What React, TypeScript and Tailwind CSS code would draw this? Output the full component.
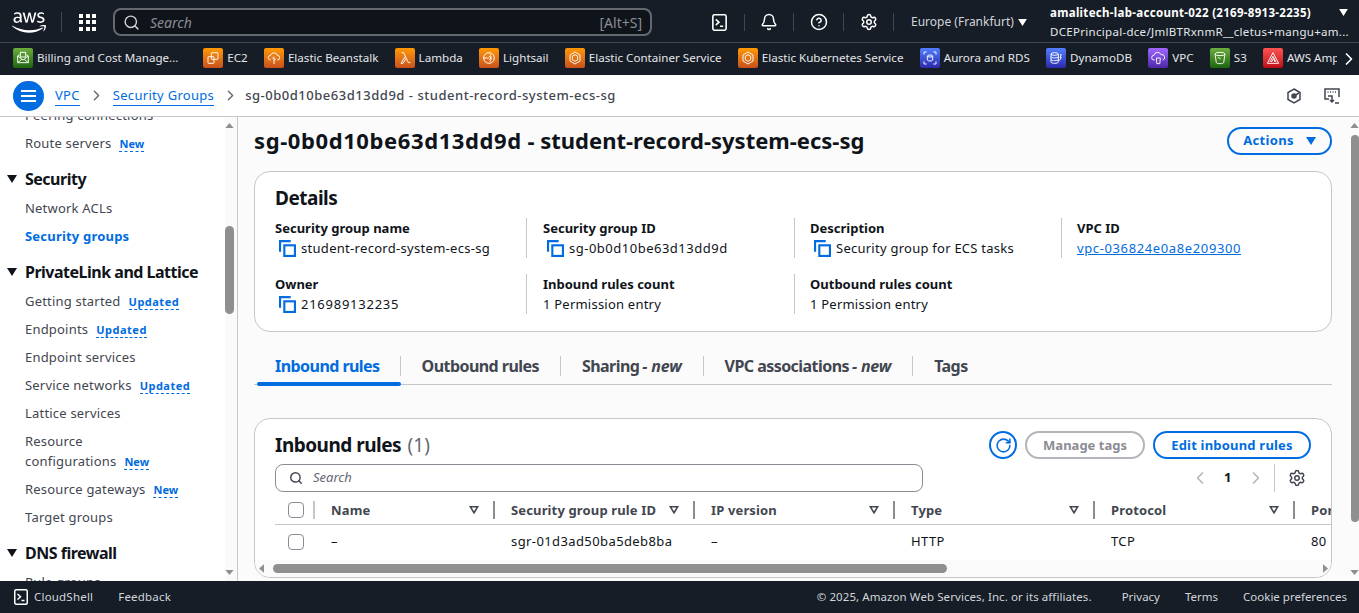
import { ReactNode } from "react";
import { Bell, ChevronLeft, ChevronRight, CircleHelp, RotateCw, Search, Settings } from "lucide-react";
import { FaAws } from "react-icons/fa";

const ORANGE = "bg-linear-to-t from-[#c8511b] to-[#ff9900]";
const BLUE = "bg-linear-to-t from-[#2e27ad] to-[#527fff]";
const GREEN = "bg-linear-to-t from-[#1b660f] to-[#6cae3e]";
const PURPLE = "bg-linear-to-t from-[#4d27a8] to-[#a166ff]";
const RED = "bg-linear-to-t from-[#bd0816] to-[#ff5252]";

const glyphs: Record<string, ReactNode> = {
  billing: (
    <>
      <path d="M4 9l8 6 8-6v10H4z" />
      <path d="M4 9l3-2M20 9l-3-2M4 19l6-5M20 19l-6-5" />
      <rect x="8" y="3.5" width="8" height="7" />
    </>
  ),
  ec2: (
    <>
      <rect x="9.5" y="4" width="10" height="10" rx="1" />
      <rect x="4.5" y="10" width="9" height="10" rx="1" />
    </>
  ),
  beanstalk: (
    <>
      <path d="M7 15a3.5 3.5 0 0 1 0-7 5.2 5.2 0 0 1 10 0 3.5 3.5 0 0 1 0 7" />
      <path d="M12 21V10M12 14l-3-3M12 16l3-3" />
    </>
  ),
  lambda: <path d="M7 4h3l7 15h3M12 10l-6 10h3l4.5-7" />,
  lightsail: (
    <>
      <circle cx="12" cy="12" r="8" />
      <path d="M3 12h9M13 6c3 3 3 9 0 12M12 9l3 3-3 3" />
    </>
  ),
  container: (
    <>
      <path d="M12 3l7.5 4.5v9L12 21l-7.5-4.5v-9z" />
      <path d="M12 7l4 2.3v5.4L12 17l-4-2.3V9.300z" />
    </>
  ),
  aurora: (
    <>
      <path d="M3 7V3h4M17 3h4v4M21 17v4h-4M7 21H3v-4" />
      <ellipse cx="12" cy="9" rx="4" ry="1.500" />
      <path d="M8 9v6c0 2 8 2 8 0V9" />
    </>
  ),
  dynamo: (
    <>
      <ellipse cx="10" cy="6" rx="5.500" ry="2" />
      <path d="M4.500 6v12c0 2.600 11 2.600 11 0V6M4.500 10c0 2.600 11 2.600 11 0M4.500 14c0 2.600 11 2.600 11 0" />
      <path d="M18 7h2l-2 4h2l-3 5" />
    </>
  ),
  vpc: (
    <>
      <path d="M7 15H6a3.500 3.500 0 0 1 0-7 5.500 5.500 0 0 1 10.500-1A4 4 0 0 1 19 15" />
      <path d="M9.500 12h6l-.8 8.500h-4.400z" />
    </>
  ),
  s3: (
    <>
      <ellipse cx="12" cy="6" rx="7.500" ry="2.500" />
      <path d="M4.500 6l2 13c.5 2 10.500 2 11 0l2-13" />
      <path d="M9 11l4 2.500" />
    </>
  ),
  amp: <path d="M12 4l8.500 16h-17zM12 9.500L7.500 18M12 9.500L16.500 18M9.500 18l3.500-5 2 5" />,
};

const bookmarks = [
  { label: "Billing and Cost Manage...", bg: GREEN, glyph: "billing", textClass: "w-[150px]" },
  { label: "EC2", bg: ORANGE, glyph: "ec2", textClass: "" },
  { label: "Elastic Beanstalk", bg: ORANGE, glyph: "beanstalk", textClass: "" },
  { label: "Lambda", bg: ORANGE, glyph: "lambda", textClass: "" },
  { label: "Lightsail", bg: ORANGE, glyph: "lightsail", textClass: "" },
  { label: "Elastic Container Service", bg: ORANGE, glyph: "container", textClass: "" },
  { label: "Elastic Kubernetes Service", bg: ORANGE, glyph: "container", textClass: "" },
  { label: "Aurora and RDS", bg: BLUE, glyph: "aurora", textClass: "" },
  { label: "DynamoDB", bg: BLUE, glyph: "dynamo", textClass: "" },
  { label: "VPC", bg: PURPLE, glyph: "vpc", textClass: "" },
  { label: "S3", bg: GREEN, glyph: "s3", textClass: "" },
  { label: "AWS Amplify", bg: RED, glyph: "amp", textClass: "w-[50px] overflow-hidden" },
];

function TerminalIcon({ className }: { className: string }) {
  return (
    <svg viewBox="0 0 16 16" fill="none" stroke="currentColor" strokeWidth="1.5" className={className}>
      <rect x="1.750" y="0.750" width="12.500" height="14.500" rx="1.500" />
      <path d="M4.500 5l3 2.700-3 2.800M8.500 11.500h3" />
    </svg>
  );
}

function TopBar() {
  return (
    <div className="flex h-[42px] items-center bg-[#161d26] pt-[2px] text-white">
      <FaAws className="ml-[12px] h-[33px] w-[34px]" />
      <div className="ml-[15px] h-[20px] w-px bg-[#424650]" />
      <div className="ml-[17px] grid grid-cols-3 gap-[2.500px]">
        {Array.from({ length: 9 }).map((_, i) => (
          <span key={i} className="h-[4px] w-[4px] bg-white" />
        ))}
      </div>
      <div className="ml-[17px] flex h-[28px] w-[539px] items-center rounded-lg border-2 border-[#656871] bg-[#0f141a] pr-[8px] pl-[8px]">
        <Search className="h-[17px] w-[17px] text-[#d1d5db]" strokeWidth={2} />
        <span className="ml-[10px] flex-1 text-[14px] text-[#8c8c94] italic">Search</span>
        <span className="text-[14px] text-[#8c8c94]">[Alt+S]</span>
      </div>
      <div className="ml-[59px] flex h-[20px] w-[183px] items-center">
        <div className="flex w-[34px] justify-start border-r border-[#424650]">
          <TerminalIcon className="h-[17px] w-[17px]" />
        </div>
        <div className="flex w-[49px] justify-center border-r border-[#424650]">
          <Bell className="h-[18px] w-[18px]" strokeWidth={2} />
        </div>
        <div className="flex w-[50px] justify-center border-r border-[#424650]">
          <CircleHelp className="h-[18px] w-[18px]" strokeWidth={2} />
        </div>
        <div className="flex w-[50px] justify-center border-r border-[#424650]">
          <Settings className="h-[18px] w-[18px]" strokeWidth={2} />
        </div>
      </div>
      <div className="ml-[17px] flex w-[139px] items-center text-[12px] text-[#d1d5db]">
        Europe (Frankfurt)
        <svg viewBox="0 0 10 8" className="ml-[4px] h-[7px] w-[9px] fill-white">
          <path d="M0 0h10L5 8z" />
        </svg>
      </div>
      <div className="relative -mt-[1px] w-[309px] text-[11.500px] leading-[19px] tracking-[0.3px]">
        <div className="font-bold whitespace-nowrap">amalitech-lab-account-022 (2169-8913-2235)</div>
        <div className="whitespace-nowrap text-[#e5e7eb]">DCEPrincipal-dce/JmlBTRxnmR__cletus+mangu+am...</div>
        <svg viewBox="0 0 10 8" className="absolute top-[6px] right-[11px] h-[7px] w-[9px] fill-white">
          <path d="M0 0h10L5 8z" />
        </svg>
      </div>
    </div>
  );
}

function BookmarkBar() {
  return (
    <div className="relative flex h-[33px] items-center gap-[16.250px] overflow-hidden border-t border-[#424650] bg-[#161d26] pb-[2px] pl-[13px]">
      {bookmarks.map((b) => (
        <div key={b.label} className="flex shrink-0 items-center gap-[4px]">
          <span className={`flex h-[20px] w-[20px] items-center justify-center rounded-[2px] ${b.bg}`}>
            <svg viewBox="0 0 24 24" fill="none" stroke="white" strokeWidth="1.400" className="h-[16px] w-[16px]">
              {glyphs[b.glyph]}
            </svg>
          </span>
          <span className={`text-[11.600px] whitespace-nowrap text-[#e5e7eb] ${b.textClass}`}>{b.label}</span>
        </div>
      ))}
      <div className="absolute top-0 right-0 flex h-full w-[20px] items-center bg-[#161d26]">
        <ChevronRight className="h-[22px] w-[22px] text-white" strokeWidth={2} />
      </div>
    </div>
  );
}

function Crumb() {
  return (
    <div className="flex h-[42px] items-center border-b border-[#c6c6cd] bg-white pr-[19px] pl-[13px] text-[13px] tracking-[0.3px]">
      <button className="flex h-[30px] w-[31px] flex-col items-center justify-center gap-[3px] rounded-full bg-[#006ce0]">
        <span className="h-[2px] w-[15px] bg-white" />
        <span className="h-[2px] w-[15px] bg-white" />
        <span className="h-[2px] w-[15px] bg-white" />
      </button>
      <a className="ml-[11px] border-b border-[#006ce0] leading-[19px] text-[#006ce0]">VPC</a>
      <ChevronRight className="mx-[8px] h-[17px] w-[17px] text-[#656871]" />
      <a className="border-b border-[#006ce0] leading-[19px] text-[#006ce0]">Security Groups</a>
      <ChevronRight className="mr-[6px] ml-[8px] h-[17px] w-[17px] text-[#656871]" />
      <span className="font-medium tracking-[0.52px] text-[#424650]">sg-0b0d10be63d13dd9d - student-record-system-ecs-sg</span>
      <div className="ml-auto flex items-center gap-[22px] text-[#424650]">
        <svg viewBox="0 0 16 16" fill="none" stroke="currentColor" strokeWidth="1.500" className="h-[16px] w-[16px]">
          <path d="M8 1l6 3.500v7L8 15l-6-3.500v-7z" />
          <circle cx="8" cy="8" r="2" fill="currentColor" />
          <path d="M8 8l5-3" />
        </svg>
        <svg viewBox="0 0 16 16" fill="none" stroke="currentColor" strokeWidth="1.500" className="h-[16px] w-[16px]">
          <path d="M5 11H1V1h14v8" />
          <path d="M3.500 4h1M6 4h1M8.500 4h1M11 4h1" />
          <path d="M4 8h4v6M6 12l2 2 2-2M11 15h4" />
        </svg>
      </div>
    </div>
  );
}

function Badge({ children }: { children: string }) {
  return (
    <span
      className={`ml-[8px] inline-block border-b border-dashed border-[#006ce0] align-middle text-[11px] leading-[14px] font-bold text-[#006ce0] ${
        children === "Updated" ? "tracking-[0.5px]" : "tracking-normal"
      }`}
    >
      {children}
    </span>
  );
}

function NavItem({ children, badge, active }: { children: string; badge?: string; active?: boolean }) {
  return (
    <div className={`py-[4px] pl-[25px] text-[13px] leading-[20px] tracking-[0.2px] ${active ? "font-bold text-[#006ce0]" : "text-[#424650]"}`}>
      {children}
      {badge && <Badge>{badge}</Badge>}
    </div>
  );
}

function NavHeading({ children }: { children: string }) {
  return (
    <div className="mt-[8px] flex h-[29px] items-center pb-[2px] text-[16px] font-bold tracking-[-0.5px] text-[#0f141a]">
      <svg viewBox="0 0 10 8" className="mr-[8px] ml-[7px] h-[8px] w-[10px] fill-[#0f141a]">
        <path d="M0 0h10L5 8z" />
      </svg>
      {children}
    </div>
  );
}

function Sidebar() {
  return (
    <div className="relative w-[238px] shrink-0 overflow-hidden border-r border-[#c6c6cd] bg-white">
      <div className="-mt-[16px] w-[225px]">
        <NavItem>Peering connections</NavItem>
        <NavItem badge="New">Route servers</NavItem>
        <NavHeading>Security</NavHeading>
        <NavItem>Network ACLs</NavItem>
        <NavItem active>Security groups</NavItem>
        <NavHeading>PrivateLink and Lattice</NavHeading>
        <NavItem badge="Updated">Getting started</NavItem>
        <NavItem badge="Updated">Endpoints</NavItem>
        <NavItem>Endpoint services</NavItem>
        <NavItem badge="Updated">Service networks</NavItem>
        <NavItem>Lattice services</NavItem>
        <div className="w-[170px]">
          <NavItem badge="New">Resource configurations</NavItem>
        </div>
        <NavItem badge="New">Resource gateways</NavItem>
        <NavItem>Target groups</NavItem>
        <NavHeading>DNS firewall</NavHeading>
        <NavItem>Rule groups</NavItem>
      </div>
      <div className="absolute top-0 right-0 bottom-0 w-[12px] bg-[#fafafa]" />
      <VerticalArrows right="right-[3px]" />
      <div className="absolute top-[109px] right-[3px] h-[88px] w-[9px] rounded-full bg-[#8f8f8f]" />
    </div>
  );
}

function VerticalArrows({ right }: { right: string }) {
  return (
    <>
      <svg viewBox="0 0 10 6" className={`absolute top-[6px] h-[5px] w-[9px] fill-[#8f8f8f] ${right}`}>
        <path d="M5 0l5 6H0z" />
      </svg>
      <svg viewBox="0 0 10 6" className={`absolute bottom-[6px] h-[5px] w-[9px] fill-[#8f8f8f] ${right}`}>
        <path d="M0 0h10L5 6z" />
      </svg>
    </>
  );
}

function CopyIcon() {
  return (
    <svg viewBox="0 0 16 16" fill="none" stroke="#006ce0" strokeWidth="2" className="mr-[5px] ml-[4px] h-[17px] w-[17px] shrink-0">
      <path d="M1 11V1h10" />
      <rect x="5" y="5" width="10" height="10" />
    </svg>
  );
}

function Field({
  label,
  value,
  copy,
  link,
  divider,
  spacing,
}: {
  label: string;
  value: string;
  copy?: boolean;
  link?: boolean;
  divider?: boolean;
  spacing: string;
}) {
  return (
    <div className={`h-[40px] w-[252px] text-[13px] leading-[20px] ${divider ? "border-r border-[#c6c6cd]" : ""}`}>
      <div className="font-bold text-[#0f141a]">{label}</div>
      <div className={`flex items-center whitespace-nowrap text-[#0f141a] ${spacing}`}>
        {copy && <CopyIcon />}
        {link ? <a className="text-[#006ce0] underline">{value}</a> : value}
      </div>
    </div>
  );
}

function DetailsCard() {
  return (
    <div className="mt-[16px] h-[161px] rounded-2xl border border-[#c6c6cd] bg-white px-[20px] pt-[12px]">
      <h2 className="text-[19px] leading-[28px] font-bold tracking-[-0.5px] text-[#0f141a]">Details</h2>
      <div className="mt-[6px] grid grid-cols-[268px_267px_267px_1fr] gap-y-[16px]">
        <Field divider copy spacing="tracking-[0.3px]" label="Security group name" value="student-record-system-ecs-sg" />
        <Field divider copy spacing="tracking-[0.5px]" label="Security group ID" value="sg-0b0d10be63d13dd9d" />
        <Field divider copy spacing="tracking-[0.25px]" label="Description" value="Security group for ECS tasks" />
        <Field link spacing="tracking-[0.62px]" label="VPC ID" value="vpc-036824e0a8e209300" />
        <Field divider copy spacing="tracking-[0.75px]" label="Owner" value="216989132235" />
        <Field divider spacing="tracking-[0.22px]" label="Inbound rules count" value="1 Permission entry" />
        <Field spacing="tracking-[0.22px]" label="Outbound rules count" value="1 Permission entry" />
      </div>
    </div>
  );
}

function Tabs() {
  const tabs: [string, string?][] = [
    ["Inbound rules"],
    ["Outbound rules"],
    ["Sharing", "new"],
    ["VPC associations", "new"],
    ["Tags"],
  ];
  return (
    <div className="mt-[22px] flex h-[31px] border-b border-[#c6c6cd] text-[16px] font-bold tracking-[-0.55px]">
      {tabs.map(([name, extra], i) => (
        <div key={name} className={`relative flex h-[31px] ${i === 0 ? "ml-[3px]" : ""}`}>
          <div
            className={`mt-px flex h-[22px] w-max items-center whitespace-nowrap ${
              i === 0 ? "pr-[20px] pl-[18px] text-[#006ce0]" : "px-[21px] text-[#424650]"
            }`}
          >
            {name}
            {extra && <span className="ml-[3px] whitespace-pre tracking-[-0.2px] italic">- {extra}</span>}
          </div>
          {i < tabs.length - 1 && <div className="mt-[2px] h-[20px] w-px bg-[#c6c6cd]" />}
          {i === 0 && <div className="absolute right-0 bottom-[-1px] left-0 h-[4px] rounded-full bg-[#006ce0]" />}
        </div>
      ))}
    </div>
  );
}

function FilterMark() {
  return (
    <svg viewBox="0 0 12 10" fill="none" stroke="#424650" strokeWidth="2" className="h-[8px] w-[10px]">
      <path d="M1.500 1h9L6 8.500z" />
    </svg>
  );
}

function HeaderCell({ label, width, clipped }: { label: string; width: string; clipped?: boolean }) {
  return (
    <div className={`flex h-[22px] shrink-0 items-center pl-[16px] text-[13px] font-bold tracking-[0.14px] text-[#424650] ${width}`}>
      <span className="flex-1 pt-[2px] whitespace-nowrap">{label}</span>
      {!clipped && (
        <>
          <FilterMark />
          <span className="mr-0 ml-[14px] h-[18px] w-[2px] bg-[#8c8c94]" />
        </>
      )}
    </div>
  );
}

function Checkbox() {
  return <span className="block h-[16px] w-[16px] rounded-[4px] border border-[#8c8c94] bg-white" />;
}

function RulesCard() {
  const cell = "shrink-0 pl-[16px] text-[13px] tracking-[0.4px] text-[#0f141a]";
  return (
    <div className="relative mt-[33px] h-[160px] overflow-hidden rounded-2xl border border-[#c6c6cd] bg-white">
      <div className="flex h-[44px] items-center justify-between pt-[8px] pr-[20px] pl-[20px]">
        <h2 className="text-[19px] font-bold tracking-[-0.5px] text-[#0f141a]">
          Inbound rules <span className="ml-[2px] font-normal tracking-[0px] text-[#656871]">(1)</span>
        </h2>
        <div className="flex items-center gap-[8px] text-[13px] font-bold">
          <button className="flex h-[28px] w-[28px] items-center justify-center rounded-full border-2 border-[#006ce0] text-[#006ce0]">
            <RotateCw className="h-[17px] w-[17px]" strokeWidth={2.200} />
          </button>
          <button className="h-[28px] w-[120px] rounded-full border-2 border-[#b4b4bb] pt-[1px] text-[#8c8c94]">Manage tags</button>
          <button className="h-[28px] w-[158px] rounded-full border-2 border-[#006ce0] pt-[1px] tracking-[0.2px] text-[#006ce0]">
            Edit inbound rules
          </button>
        </div>
      </div>
      <div className="flex h-[29px] items-center pl-[20px]">
        <div className="flex h-[28px] w-[648px] items-center rounded-lg border border-[#8c8c94] pl-[13px] text-[13px] text-[#656871] italic">
          <Search className="mr-[10px] h-[14px] w-[14px] text-[#424650]" strokeWidth={2.500} />
          Search
        </div>
        <ChevronLeft className="ml-[267px] h-[20px] w-[20px] text-[#b4b4bb]" />
        <span className="ml-[14px] text-[13px] font-bold text-[#0f141a]">1</span>
        <ChevronRight className="ml-[15px] h-[20px] w-[20px] text-[#b4b4bb]" />
        <span className="ml-[8px] h-[28px] w-px bg-[#c6c6cd]" />
        <Settings className="ml-[13px] h-[18px] w-[18px] text-[#424650]" strokeWidth={2} />
      </div>
      <div className="ml-[20px] w-[1100px]">
        <div className="flex h-[33px] items-center border-b border-[#c6c6cd] pt-[4px]">
          <div className="flex h-[22px] w-[40px] shrink-0 items-center pl-[13px]">
            <Checkbox />
            <span className="ml-[9px] h-[18px] w-[2px] bg-[#c6c6cd]" />
          </div>
          <HeaderCell width="w-[180px]" label="Name" />
          <HeaderCell width="w-[200px]" label="Security group rule ID" />
          <HeaderCell width="w-[200px]" label="IP version" />
          <HeaderCell width="w-[200px]" label="Type" />
          <HeaderCell width="w-[200px]" label="Protocol" />
          <HeaderCell width="w-[80px]" label="Port range" clipped />
        </div>
        <div className="flex h-[32px] items-center pt-[2px]">
          <div className="w-[40px] shrink-0 pl-[13px]">
            <Checkbox />
          </div>
          <div className={`w-[180px] ${cell}`}>–</div>
          <div className={`w-[200px] ${cell}`}>sgr-01d3ad50ba5deb8ba</div>
          <div className={`w-[200px] ${cell}`}>–</div>
          <div className={`w-[200px] ${cell}`}>HTTP</div>
          <div className={`w-[200px] ${cell}`}>TCP</div>
          <div className={`w-[80px] ${cell}`}>80</div>
        </div>
      </div>
      {/* horizontal scrollbar sits over the bottom of the card */}
      <div className="absolute right-0 bottom-0 left-0 h-[17px] bg-[#fafafa]">
        <svg viewBox="0 0 6 10" className="absolute top-[4px] left-[4px] h-[9px] w-[5px] fill-[#8f8f8f]">
          <path d="M6 0v10L0 5z" />
        </svg>
        <svg viewBox="0 0 6 10" className="absolute top-[4px] right-[3px] h-[9px] w-[5px] fill-[#8f8f8f]">
          <path d="M0 0v10l6-5z" />
        </svg>
        <div className="absolute top-[4px] left-[18px] h-[9px] w-[674px] rounded-full bg-[#8f8f8f]" />
      </div>
    </div>
  );
}

function Main() {
  return (
    <div className="relative min-w-0 flex-1 overflow-hidden bg-[#fbfbfb]">
      <div className="pr-[27px] pl-[16px]">
        <div className="flex h-[38px] items-end justify-between">
          <h1 className="text-[22px] leading-[30px] font-bold whitespace-nowrap text-[#0f141a]">
            <span className="tracking-[0.6px]">sg-0b0d10be63d13dd9d</span> - student-record-system-ecs-sg
          </h1>
          <button className="flex h-[28px] w-[105px] items-center justify-center gap-[12px] rounded-full border-2 border-[#006ce0] text-[13px] font-bold tracking-[0.3px] text-[#006ce0]">
            Actions
            <svg viewBox="0 0 10 8" className="h-[8px] w-[10px] fill-[#006ce0]">
              <path d="M0 0h10L5 8z" />
            </svg>
          </button>
        </div>
        <DetailsCard />
        <Tabs />
        <RulesCard />
      </div>
      <VerticalArrows right="right-0" />
      <div className="absolute top-[18px] right-0 h-[387px] w-[8px] rounded-full bg-[#8f8f8f]" />
    </div>
  );
}

function Footer() {
  return (
    <div className="flex h-[32px] items-center bg-[#161d26] pr-[12px] pl-[13px] text-[11.500px] text-[#d1d5db]">
      <TerminalIcon className="h-[16px] w-[16px] text-white" />
      <span className="ml-[5px] tracking-[0.2px]">CloudShell</span>
      <span className="ml-[25px] tracking-[0.2px]">Feedback</span>
      <span className="ml-auto tracking-[0.08px]">© 2025, Amazon Web Services, Inc. or its affiliates.</span>
      <span className="ml-[30px]">Privacy</span>
      <span className="ml-[25px]">Terms</span>
      <span className="ml-[25px]">Cookie preferences</span>
    </div>
  );
}

export default function App() {
  return (
    <div className="flex h-[613px] w-[1359px] flex-col overflow-hidden font-['Noto_Sans',sans-serif]">
      <TopBar />
      <BookmarkBar />
      <Crumb />
      <div className="flex min-h-0 flex-1">
        <Sidebar />
        <Main />
      </div>
      <Footer />
    </div>
  );
}
